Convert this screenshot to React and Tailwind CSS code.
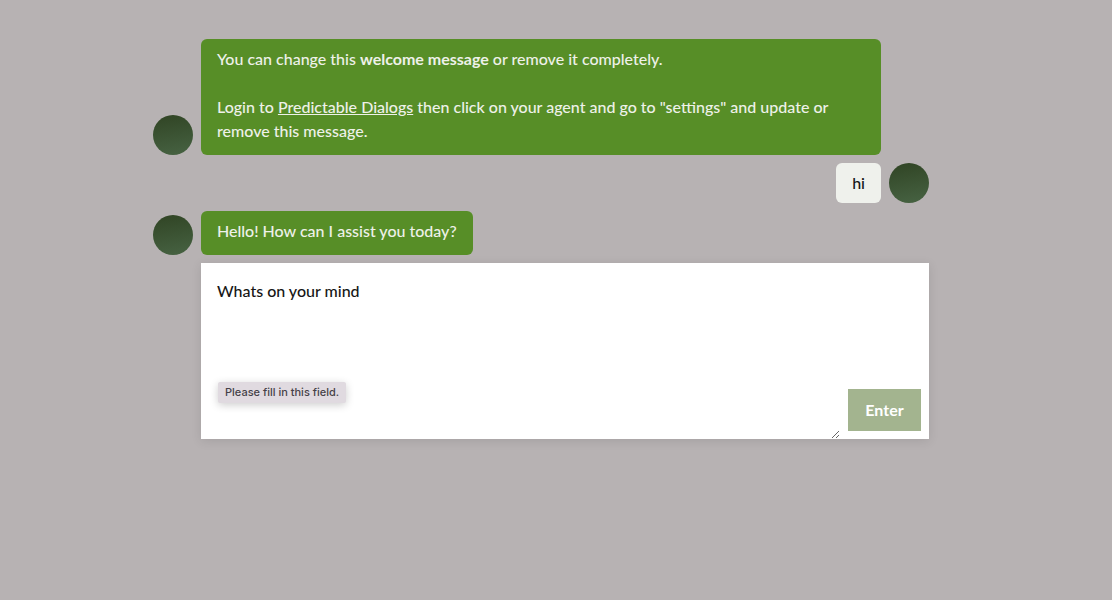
function Avatar() {
  return (
    <div
      aria-hidden="true"
      className="size-10 shrink-0 rounded-full bg-linear-[170deg] from-[#304424] to-[#476343]"
    />
  );
}

function BotMessage({ children }) {
  return (
    <div className="flex items-end gap-2 pr-12">
      <Avatar />
      <div className="rounded-md bg-[#578e27] px-4 pt-2 pb-3 text-[#eef1e9]">{children}</div>
    </div>
  );
}

function UserMessage({ children }) {
  return (
    <div className="flex items-end justify-end gap-2">
      <div className="rounded-md bg-[#eff1ec] px-4 py-2 text-[#161616]">{children}</div>
      <Avatar />
    </div>
  );
}

export default function App() {
  return (
    <main className="min-h-screen bg-[#b7b2b3] pt-[39px] font-['Lato',sans-serif] text-base leading-6 font-medium">
      <div className="mx-auto flex w-full max-w-[806px] flex-col gap-2 pr-[30px]">
        <BotMessage>
          <p>
            You can change this <strong>welcome message</strong> or remove it completely.
          </p>
          <p className="mt-6">
            Login to{" "}
            <a href="#dialogs" className="underline">
              Predictable Dialogs
            </a>{" "}
            then click on your agent and go to "settings" and update or remove this message.
          </p>
        </BotMessage>
        <UserMessage>hi</UserMessage>
        <BotMessage>
          <p>Hello! How can I assist you today?</p>
        </BotMessage>
        <form className="relative ml-12 flex items-end gap-2 bg-white pr-2 shadow-[0_2px_10px_rgba(0,0,0,0.1)]">
          <textarea
            aria-label="Message"
            required
            placeholder="Whats on your mind"
            className="block h-44 min-w-0 flex-1 resize bg-transparent p-4 text-[#161616] outline-none placeholder:text-[#161616]"
          />
          <button
            type="submit"
            className="mb-2 h-[42px] w-[73px] bg-[#a3b48f] font-bold text-white"
          >
            Enter
          </button>
          <div
            role="tooltip"
            className="absolute bottom-9 left-[17px] rounded-xs bg-[#e0dae0] px-[7px] font-['Inter',sans-serif] text-[11px] leading-[21px] font-medium whitespace-nowrap text-[#464248] shadow-[0_2px_8px_rgba(0,0,0,0.2)]"
          >
            Please fill in this field.
          </div>
        </form>
      </div>
    </main>
  );
}
